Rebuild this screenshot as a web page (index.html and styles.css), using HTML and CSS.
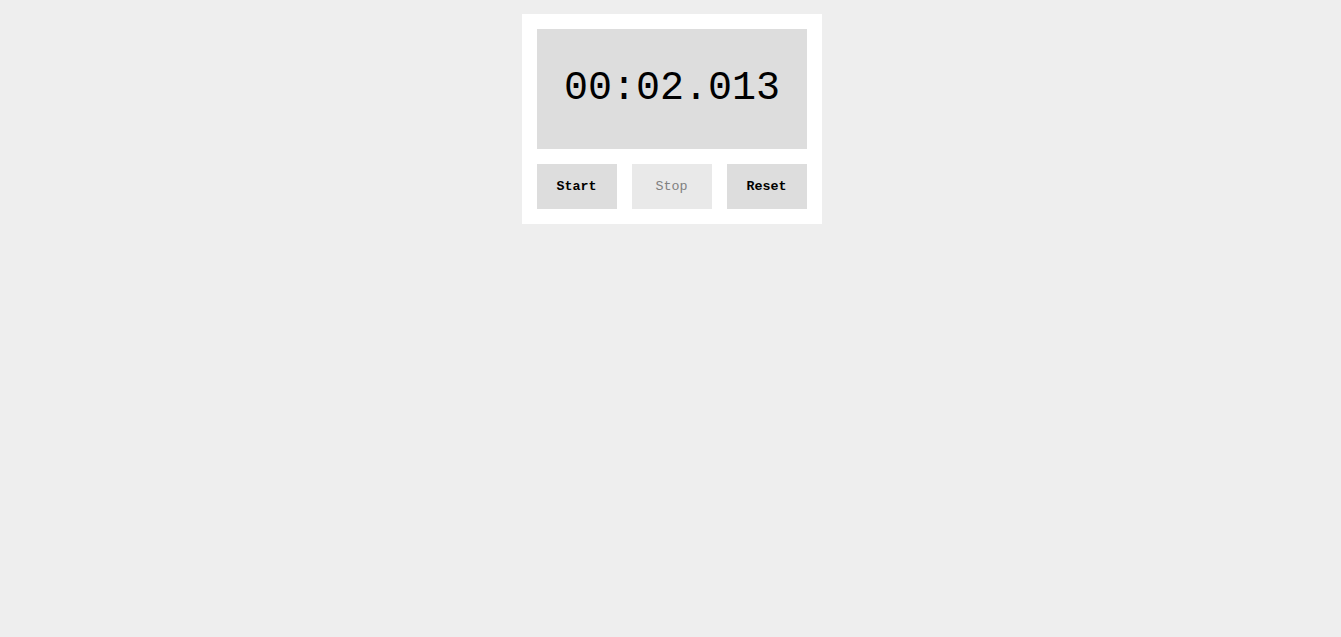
FILE: index.html
```html
<!DOCTYPE html>
<html>
<head>
<meta charset="utf-8">
<link rel="stylesheet" href="styles.css">
</head>
<body>
<div class="stopwatch">
  <div class="display">00:02.013</div>
  <div class="controls">
    <button class="btn">Start</button>
    <button class="btn" disabled>Stop</button>
    <button class="btn">Reset</button>
  </div>
</div>
</body>
</html>
```
FILE: styles.css
```css
html, body {
  margin: 0;
  padding: 0;
  background: #eeeeee;
}
body {
  display: flex;
  justify-content: center;
  padding-top: 14px;
  padding-left: 2px;
  font-family: "Liberation Mono", "Courier New", monospace;
}
.stopwatch {
  width: 270px;
  padding: 15px;
  background: #ffffff;
  display: flex;
  flex-direction: column;
  gap: 15px;
}
.display {
  height: 120px;
  background: #dddddd;
  display: flex;
  align-items: center;
  justify-content: center;
  font-size: 40px;
  color: #000;
  padding-left: 1px;
  padding-bottom: 2px;
  box-sizing: border-box;
}
.controls {
  display: flex;
  gap: 15px;
}
.btn {
  width: 80px;
  height: 45px;
  border: none;
  background: #dddddd;
  font-family: "Liberation Mono", "Courier New", monospace;
  font-size: 13.333px;
  font-weight: bold;
  color: #000;
  padding: 0;
}
.btn:disabled {
  background: #e9e9e9;
  color: #808080;
  font-weight: normal;
}
```
